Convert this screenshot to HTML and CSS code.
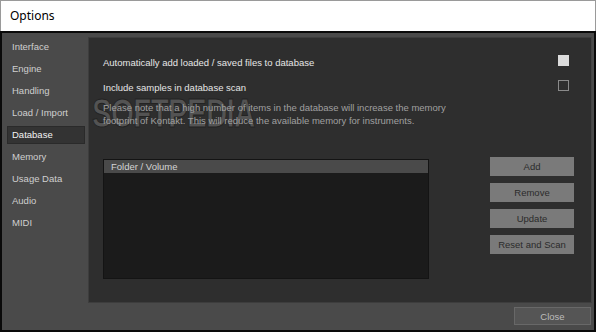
FILE: index.html
```html
<!DOCTYPE html>
<html>
<head>
<meta charset="utf-8">
<link rel="stylesheet" href="styles.css">
</head>
<body>
<div class="titlebar">Options</div>
<div class="window">
  <div class="main">
    <ul class="sidebar">
      <li class="item">Interface</li>
      <li class="item">Engine</li>
      <li class="item">Handling</li>
      <li class="item">Load / Import</li>
      <li class="item selected">Database</li>
      <li class="item">Memory</li>
      <li class="item">Usage Data</li>
      <li class="item">Audio</li>
      <li class="item">MIDI</li>
    </ul>
    <div class="panel">
      <div class="watermark">SOFTPEDIA</div>
      <div class="row">
        <span class="label">Automatically add loaded / saved files to database</span>
        <span class="check checked"></span>
      </div>
      <div class="row">
        <span class="label">Include samples in database scan</span>
        <span class="check"></span>
      </div>
      <p class="note">Please note that a high number of items in the database will increase the memory<br>footprint of Kontakt. This will reduce the available memory for instruments.</p>
      <div class="lower">
        <div class="list">
          <div class="list-head">Folder / Volume</div>
          <div class="list-body"></div>
        </div>
        <div class="buttons">
          <button class="btn">Add</button>
          <button class="btn">Remove</button>
          <button class="btn">Update</button>
          <button class="btn">Reset and Scan</button>
        </div>
      </div>
    </div>
  </div>
  <div class="footer">
    <button class="close">Close</button>
  </div>
</div>
</body>
</html>
```

FILE: styles.css
```css
html, body {
  margin: 0;
  padding: 0;
  background: #ffffff;
  width: 596px;
  height: 334px;
  overflow: hidden;
}

.titlebar {
  height: 31px;
  box-sizing: border-box;
  border-top: 1px solid #9a9a9a;
  border-left: 1px solid #9a9a9a;
  border-right: 1px solid #9a9a9a;
  padding-left: 9px;
  font-family: "Noto Sans", "Liberation Sans", sans-serif;
  font-size: 12px;
  line-height: 30px;
  color: #000;
  background: #fff;
}

.window {
  box-sizing: border-box;
  width: 596px;
  height: 301px;
  background: #4a4a4a;
  border: 2px solid #0a0a0a;
  display: flex;
  flex-direction: column;
  font-family: "Liberation Sans", "DejaVu Sans", sans-serif;
  font-size: 9.5px;
}

.main {
  display: flex;
  margin-top: 4px;
  height: 266px;
}

.sidebar {
  list-style: none;
  margin: 0;
  padding: 1px 3px 0 5px;
  width: 78px;
  display: flex;
  flex-direction: column;
  gap: 4px;
}

.item {
  height: 18px;
  line-height: 18px;
  padding-left: 5px;
  color: #cfcfcf;
  box-sizing: border-box;
}

.item.selected {
  background: #333333;
  border: 1px solid #2a2a2a;
  line-height: 16px;
  padding-left: 4px;
  color: #f2f2f2;
}

.panel {
  position: relative;
  flex: 1;
  margin-right: 2px;
  background: #2e2e2e;
  border: 1px solid #3d3d3d;
  border-right-color: #444;
  padding: 17px 22px 0 14px;
  box-sizing: border-box;
  overflow: hidden;
}

.row {
  display: flex;
  align-items: center;
  justify-content: space-between;
  height: 11px;
  margin-bottom: 14px;
  color: #e6e6e6;
}

.label {
  padding-top: 3px;
}

.check {
  width: 11px;
  height: 11px;
  box-sizing: border-box;
  border: 1px solid #8a8a8a;
}

.check.checked {
  background: #dcdcdc;
  border-color: #dcdcdc;
}

.note {
  position: relative;
  z-index: 1;
  margin: -4px 0 0 0;
  line-height: 13.3px;
  color: #a0a0a0;
}

.lower {
  display: flex;
  margin-top: 29px;
}

.list {
  margin-top: 2px;
  width: 326px;
  height: 120px;
  box-sizing: border-box;
  border: 1px solid #141414;
  background: #1b1b1b;
  display: flex;
  flex-direction: column;
}

.list-head {
  height: 13px;
  line-height: 13px;
  background: #4a4a4a;
  color: #d4d4d4;
  padding-left: 7px;
}

.list-body {
  flex: 1;
}

.buttons {
  margin-left: auto;
  margin-right: -5px;
  display: flex;
  flex-direction: column;
  gap: 7px;
}

.btn {
  width: 84px;
  height: 19px;
  margin: 0;
  padding: 0;
  border: none;
  background: #7a7a7a;
  color: #2b2b2b;
  font-family: "Liberation Sans", "DejaVu Sans", sans-serif;
  font-size: 9.5px;
}

.footer {
  flex: 1;
  display: flex;
  justify-content: flex-end;
  align-items: flex-start;
  padding: 4px 3px 0 0;
}

.close {
  width: 77px;
  height: 18px;
  margin: 0;
  padding: 0;
  background: #555555;
  border: 1px solid #686868;
  color: #bdbdbd;
  font-family: "Liberation Sans", "DejaVu Sans", sans-serif;
  font-size: 9.5px;
}

.watermark {
  position: absolute;
  z-index: 0;
  left: 3px;
  top: 60px;
  font-family: "Liberation Sans", sans-serif;
  font-weight: bold;
  font-size: 40px;
  line-height: 30px;
  height: 30px;
  letter-spacing: -1px;
  transform: scaleX(0.74);
  transform-origin: left top;
  color: #535353;
  -webkit-text-stroke: 1px #232323;
  pointer-events: none;
}
```
